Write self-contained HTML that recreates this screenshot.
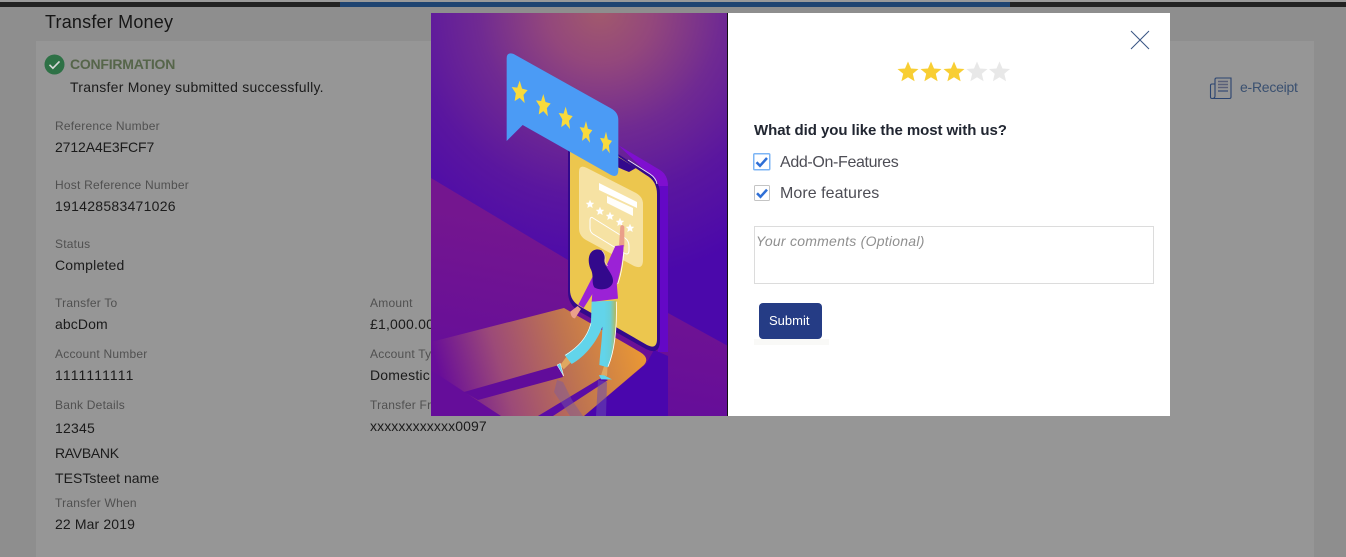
<!DOCTYPE html>
<html><head><meta charset="utf-8">
<style>
html,body{margin:0;padding:0;width:1346px;height:557px;overflow:hidden;background:#8e8e8e;font-family:"Liberation Sans",sans-serif}
.a{position:absolute;white-space:nowrap}
.l{position:absolute;white-space:nowrap;font-size:12px;line-height:16px;color:#505050;letter-spacing:.22px}
.v{position:absolute;white-space:nowrap;font-size:14px;line-height:18px;color:#1b1b1b;letter-spacing:.2px}
</style></head>
<body>
<div class="a" style="left:0;top:0;width:1346px;height:2px;background:#9a9a9a"></div>
<div class="a" style="left:0;top:2px;width:1346px;height:5px;background:#222"></div>
<div class="a" style="left:340px;top:2px;width:670px;height:5px;background:#1f4471"></div>
<div class="a" style="left:36px;top:41px;width:1278px;height:516px;background:#969696"></div>
<div class="a" style="left:45px;top:11px;font-size:18px;line-height:22px;color:#161616;letter-spacing:.2px">Transfer Money</div>

<svg class="a" style="left:44px;top:54px" width="21" height="21" viewBox="0 0 21 21"><circle cx="10.5" cy="10.5" r="10" fill="#2e7146"/><path d="M5.5 10.8l3.400 3.400 6.600-6.800" fill="none" stroke="#d8d8d8" stroke-width="1.600"/></svg>
<div class="a" style="left:70px;top:56px;font-size:14px;line-height:16px;font-weight:bold;color:#56654a;letter-spacing:-.23px">CONFIRMATION</div>
<div class="a" style="left:70px;top:78px;font-size:14px;line-height:18px;color:#1b1b1b;letter-spacing:.25px">Transfer Money submitted successfully.</div>

<div class="l" style="left:55px;top:118px">Reference Number</div>
<div class="v" style="left:55px;top:138px;letter-spacing:-.1px">2712A4E3FCF7</div>
<div class="l" style="left:55px;top:177px">Host Reference Number</div>
<div class="v" style="left:55px;top:197px;letter-spacing:.27px">191428583471026</div>
<div class="l" style="left:55px;top:236px">Status</div>
<div class="v" style="left:55px;top:256px">Completed</div>
<div class="l" style="left:55px;top:295px">Transfer To</div>
<div class="v" style="left:55px;top:315px;letter-spacing:.1px">abcDom</div>
<div class="l" style="left:55px;top:346px">Account Number</div>
<div class="v" style="left:55px;top:366px;letter-spacing:1.1px">1111111111</div>
<div class="l" style="left:55px;top:397px">Bank Details</div>
<div class="v" style="left:55px;top:419px">12345</div>
<div class="v" style="left:55px;top:444px;letter-spacing:-.3px">RAVBANK</div>
<div class="v" style="left:55px;top:469px;letter-spacing:.05px">TESTsteet name</div>
<div class="l" style="left:55px;top:495px">Transfer When</div>
<div class="v" style="left:55px;top:515px;letter-spacing:.13px">22 Mar 2019</div>

<div class="l" style="left:370px;top:295px">Amount</div>
<div class="v" style="left:370px;top:315px">£1,000.00</div>
<div class="l" style="left:370px;top:346px">Account Type</div>
<div class="v" style="left:370px;top:366px">Domestic</div>
<div class="l" style="left:370px;top:397px">Transfer From</div>
<div class="v" style="left:370px;top:417px;letter-spacing:.1px">xxxxxxxxxxxx0097</div>

<svg class="a" style="left:1208px;top:76px" width="26" height="24" viewBox="0 0 26 24" fill="none" stroke="#2b4470" stroke-width="1.100"><path d="M7 20V3.500Q7 2 8.500 2H23v19q0 1.500-1.500 1.500H4"/><path d="M7 8H4q-1.500 0-1.500 1.500V21Q2.500 22.500 4 22.500q3 0 3-2.500"/><path d="M10 5.500h10M10 8.500h10" stroke="#5a5f78" stroke-width="1.400"/><path d="M10 11.500h10" stroke="#5a5f78" stroke-width="1.400"/><path d="M10 15h10"/></svg>
<div class="a" style="left:1240px;top:78px;font-size:14px;line-height:18px;color:#3a5070;letter-spacing:-.25px">e-Receipt</div>

<svg class="a" style="left:431px;top:13px" width="297" height="403" viewBox="431 13 297 403">
<defs>
<radialGradient id="bg" gradientUnits="userSpaceOnUse" cx="600" cy="10" r="270">
<stop offset="0" stop-color="#a25a6c"/><stop offset=".2" stop-color="#93477c"/><stop offset=".45" stop-color="#702a92"/><stop offset=".7" stop-color="#5a169f"/><stop offset="1" stop-color="#4b08ab"/>
</radialGradient>
<linearGradient id="floor" gradientUnits="userSpaceOnUse" x1="500" y1="220" x2="470" y2="380">
<stop offset="0" stop-color="#74168f"/><stop offset="1" stop-color="#650d9a"/>
</linearGradient>
<linearGradient id="patch" gradientUnits="userSpaceOnUse" x1="445" y1="395" x2="640" y2="340">
<stop offset="0" stop-color="#680d99"/><stop offset=".3" stop-color="#9c4a78"/><stop offset=".65" stop-color="#c0754f"/><stop offset="1" stop-color="#ea9834"/>
</linearGradient>
<linearGradient id="leg" gradientUnits="userSpaceOnUse" x1="520" y1="0" x2="555" y2="0">
<stop offset="0" stop-color="#62d4ea"/><stop offset=".5" stop-color="#68cfd8"/><stop offset="1" stop-color="#b5b85a"/>
</linearGradient>
<polygon id="st" points="0,-10 3,-3.200 10,-2.800 4.800,2.200 6.300,9.500 0,5.600 -6.300,9.500 -4.800,2.200 -10,-2.800 -3,-3.200"/>
</defs>
<rect x="431" y="13" width="297" height="403" fill="url(#bg)"/>
<polygon points="431,178 568,260 668,313 728,346 728,416 431,416" fill="url(#floor)"/>
<polygon points="584,416 646,364 654,350 668,356 668,416" fill="#4a06ad"/>
<path d="M431 342L564 308L640 352Q650 358 644 365L584 416H501L431 370Z" fill="url(#patch)"/>
<polygon points="464,392 559,365 563,377 478,400" fill="#610c9a"/>
<polygon points="538,416 601,378 608,380 553,416" fill="#5a0ca6"/>
<polygon points="557,380 563,382 572,400 583,416 570,416 554,392" fill="#7a5aa0" opacity=".45"/>
<polygon points="598,380 607,382 606,416 596,416" fill="#6a4ab0" opacity=".55"/>
<!-- phone side -->
<path d="M618 145L660 170Q668 175 668 186V352L658 352V183Z" fill="#7f0fd0"/>
<rect x="658" y="186" width="10" height="166" fill="#6408c6"/>
<!-- phone -->
<path d="M568 122L646 172Q660 180 660 194V340Q660 356 646 349L580 312Q568 305 568 292Z" fill="#33098c"/>
<path d="M570 124L646 175Q657 181 657 194V339Q657 350 647 345L581 307Q570 301 570 290Z" fill="#ecc64e"/>
<path d="M628 160L650 174Q656 178 657 184" fill="none" stroke="#e8e0f4" stroke-width="1"/>
<polygon points="615,155 636,168 629,172 624,170 615,166" fill="#33098c"/>
<path d="M579 172Q579 164 587 168L636 193Q643 197 643 204V260Q643 270 634 266L586 240Q579 236 579 228Z" fill="#f6e2a3"/>
<polygon points="599,183 637,202 637,208 599,190" fill="#fff"/>
<polygon points="607,196 633,208 633,216 607,203" fill="#fff" opacity=".95"/>
<use href="#st" transform="translate(590,204) scale(.42)" fill="#fff"/>
<use href="#st" transform="translate(600,211) scale(.42)" fill="#fff"/>
<use href="#st" transform="translate(610,216) scale(.42)" fill="#fff"/>
<use href="#st" transform="translate(620,222) scale(.42)" fill="#fff"/>
<use href="#st" transform="translate(630,228) scale(.42)" fill="#fff"/>
<path d="M593 218L625 238Q629 241 629 246V250Q629 256 624 253L593 234Q590 232 590 228V221Q590 216 593 218Z" fill="none" stroke="#fff" stroke-width="1"/>
<!-- bubble -->
<g transform="translate(431,10) scale(.33333)">
<path d="M227 145Q227 125 248 132L540 295Q562 307 562 330V480Q562 505 540 495L275 345L227 393Z" fill="#4b9bf5"/>
<g fill="#f8da3c">
<use href="#st" transform="translate(266,245) scale(2.400,3.300) skewY(8)"/>
<use href="#st" transform="translate(337,285) scale(2.200,3.300) skewY(8)"/>
<use href="#st" transform="translate(404,323) scale(2.100,3.300) skewY(8)"/>
<use href="#st" transform="translate(465,365) scale(1.900,3.200) skewY(8)"/>
<use href="#st" transform="translate(525,397) scale(1.800,3.200) skewY(8)"/>
</g>
</g>
<!-- woman -->
<g transform="translate(431,210) scale(.33333)">
<path d="M564 105L568 50Q573 40 580 50L580 110Z" fill="#eaa08a"/>
<path d="M578 105C577 140 570 180 558 222L525 170L553 108Z" fill="#9b22d6"/>
<path d="M578 130C575 165 570 195 560 222" stroke="#fff" stroke-width="2.500" fill="none"/>
<path d="M485 200L495 235L458 294L442 284Z" fill="#9b22d6"/>
<path d="M418 305L440 288L450 297L432 325Q420 325 418 305Z" fill="#eaa08a"/>
<path d="M485 195C520 190 530 170 552 155L561 266L482 276L485 235Z" fill="#9b22d6"/>
<path d="M388 465L410 435L422 455L398 478Z" fill="#e0a860"/>
<path d="M520 465H530L528 498L510 496Z" fill="#e0a860"/>
<path d="M482 275L556 272C558 350 552 420 530 472L505 465C508 420 514 385 514 350C498 395 462 440 422 462L401 435C440 412 468 385 480 335Z" fill="url(#leg)"/>
<path d="M556 275C558 350 552 420 531 470" stroke="#fff" stroke-width="2.500" fill="none"/>
<path d="M480 340C468 385 440 412 403 436" stroke="#fff" stroke-width="2" fill="none"/>
<path d="M378 465L388 460L398 498Z" fill="#62d4ea" stroke="#fff" stroke-width="1.500"/>
<path d="M504 495L520 496L543 508L510 508Z" fill="#62d4ea"/>
<path d="M498 118C473 120 468 150 478 175C490 195 480 215 490 232C510 245 548 237 546 210C545 190 520 170 520 150C525 130 515 118 498 118Z" fill="#33098c"/>
<path d="M513 122C522 130 524 145 522 155L530 168" stroke="#e9d3e0" stroke-width="2" fill="none"/>
</g>
<rect x="727" y="13" width="1" height="403" fill="#111"/>
</svg>

<div class="a" style="left:728px;top:13px;width:442px;height:403px;background:#fff"></div>
<svg class="a" style="left:1130px;top:30px" width="20" height="20" viewBox="0 0 20 20"><path d="M1 1L19 19M19 1L1 19" stroke="#3a5684" stroke-width="1" fill="none"/></svg>

<svg class="a" style="left:896px;top:60px" width="116" height="24" viewBox="0 0 116 24">
<defs><polygon id="s2" points="0,-10.500 3,-3.500 10.500,-3 4.800,1.800 6.600,9.300 0,5.300 -6.600,9.300 -4.800,1.800 -10.500,-3 -3,-3.500"/></defs>
<use href="#s2" x="12" y="12" fill="#f8ce33"/><use href="#s2" x="35" y="12" fill="#f8ce33"/><use href="#s2" x="58" y="12" fill="#f8ce33"/>
<use href="#s2" x="81" y="12" fill="#e8e8e8"/><use href="#s2" x="103.500" y="12" fill="#e8e8e8"/>
</svg>

<div class="a" style="left:754px;top:121px;font-size:15px;line-height:20px;font-weight:bold;color:#212631;letter-spacing:-.06px">What did you like the most with us?</div>

<svg class="a" style="left:753px;top:153px" width="18" height="18" viewBox="0 0 18 18"><rect x=".75" y=".75" width="16" height="16" rx="1" fill="#fff" stroke="#7db5f5" stroke-width="1.500"/><path d="M3.500 9.200l3.500 3.600 7-7.800" fill="none" stroke="#2f6fd6" stroke-width="2.500"/></svg>
<div class="a" style="left:780px;top:153px;font-size:16px;line-height:20px;color:#4d4d55;letter-spacing:-.35px">Add-On-Features</div>
<svg class="a" style="left:754px;top:185px" width="16" height="16" viewBox="0 0 16 16"><rect x=".5" y=".5" width="15" height="15" rx="1" fill="#fff" stroke="#c4c4c4"/><path d="M3 8.200l3.500 3.600 6.500-7.200" fill="none" stroke="#2f6fd6" stroke-width="2.500"/></svg>
<div class="a" style="left:780px;top:184px;font-size:16px;line-height:20px;color:#4d4d55;letter-spacing:.05px">More features</div>

<div class="a" style="left:754px;top:226px;width:398px;height:56px;border:1px solid #dcdcdc"></div>
<div class="a" style="left:756px;top:232px;font-size:14px;line-height:18px;font-style:italic;color:#8f8f8f;letter-spacing:.25px">Your comments (Optional)</div>

<div class="a" style="left:754px;top:339px;width:75px;height:6px;background:#f9f9f7"></div>
<div class="a" style="left:759px;top:303px;width:63px;height:36px;background:#253c85;border-radius:4px;color:#fff;font-size:13px;line-height:35px;text-indent:10px">Submit</div>
</body></html>
